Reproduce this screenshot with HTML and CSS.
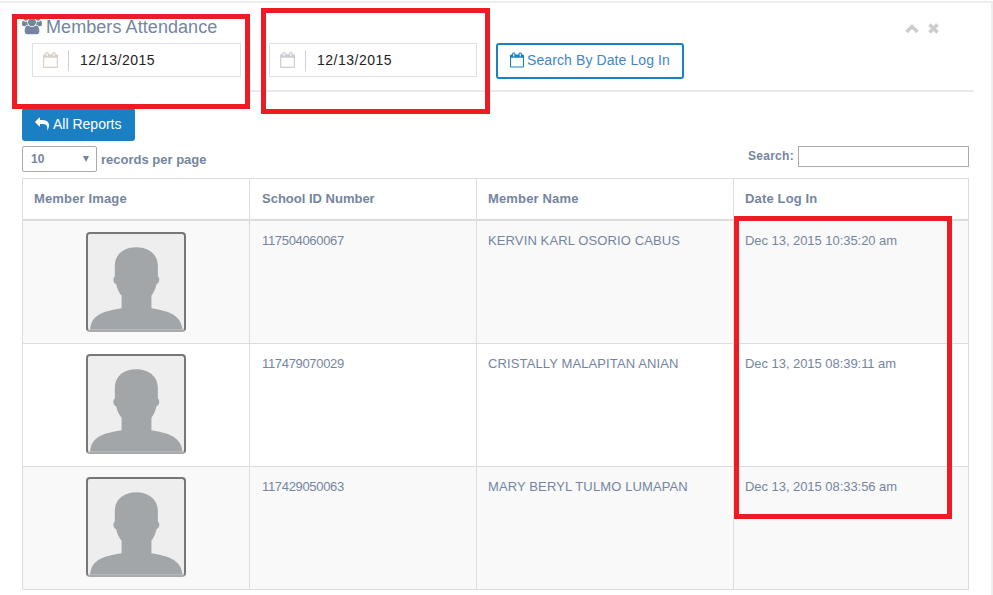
FILE: index.html
```html
<!DOCTYPE html>
<html lang="en">
<head>
    <meta charset="UTF-8">
    <title>Members Attendance</title>
    <link rel="stylesheet" href="styles.css">
</head>
<body>
    <svg class="icon-defs" width="0" height="0">
        <symbol id="cal" viewBox="0 0 1664 1792"><path d="M128 1664h1408v-1024h-1408v1024zm384-1216v-288q0-14-9-23t-23-9h-64q-14 0-23 9t-9 23v288q0 14 9 23t23 9h64q14 0 23-9t9-23zm768 0v-288q0-14-9-23t-23-9h-64q-14 0-23 9t-9 23v288q0 14 9 23t23 9h64q14 0 23-9t9-23zm384-64v1280q0 52-38 90t-90 38h-1408q-52 0-90-38t-38-90v-1280q0-52 38-90t90-38h128v-96q0-66 47-113t113-47h64q66 0 113 47t47 113v96h384v-96q0-66 47-113t113-47h64q66 0 113 47t47 113v96h128q52 0 90 38t38 90z"/></symbol>
        <symbol id="avatar" viewBox="0 0 295 295"><path d="M12 288C16 255 30 236 105 225L105 188C97 178 92 168 89 154C80 152 78 136 85 131L85 100C85 65 112 45 148 45C184 45 212 65 212 100L212 131C219 136 217 152 208 154C205 168 200 178 193 188L193 225C264 236 280 255 285 288Z"/></symbol>
    </svg>

    <div class="panel">
        <!-- Judul dan filter tanggal -->
        <div class="panel-head">
            <div class="head-title">
                <h2>
                    <svg class="icon-users" viewBox="0 0 1920 1792"><path d="M593 640q-162 5-265 128h-134q-82 0-138-40.5t-56-118.5q0-353 124-353 6 0 43.5 21t97.5 42.5 119 21.5q67 0 133-23-5 37-5 66 0 139 81 256zm1071 637q0 120-73 189.5t-194 69.5h-874q-121 0-194-69.5t-73-189.5q0-53 3.5-103.5t14-109 26.5-108.5 43-97.5 62-81 85.5-53.5 111.5-20q10 0 43 21.5t73 48 107 48 135 21.5 135-21.5 107-48 73-48 43-21.5q61 0 111.5 20t85.5 53.5 62 81 43 97.5 26.5 108.5 14 109 3.5 103.5zm-1024-1277q0 106-75 181t-181 75-181-75-75-181 75-181 181-75 181 75 75 181zm704 384q0 159-112.5 271.5t-271.5 112.5-271.5-112.5-112.5-271.5 112.5-271.5 271.5-112.5 271.5 112.5 112.5 271.5zm576 225q0 78-56 118.5t-138 40.5h-134q-103-123-265-128 81-117 81-256 0-29-5-66 66 23 133 23 59 0 119-21.5t97.5-42.5 43.5-21q124 0 124 353zm-128-609q0 106-75 181t-181 75-181-75-75-181 75-181 181-75 181 75 75 181z"/></svg>
                    Members Attendance
                </h2>
                <div class="date-field">
                    <span class="date-addon"><svg class="icon-cal icon-warm"><use href="#cal"/></svg></span>
                    <span class="date-value">12/13/2015</span>
                </div>
            </div>
            <div class="date-field date-second">
                <span class="date-addon"><svg class="icon-cal"><use href="#cal"/></svg></span>
                <span class="date-value">12/13/2015</span>
            </div>
            <button class="btn-search"><svg class="icon-cal-btn"><use href="#cal"/></svg> Search By Date Log In</button>
            <div class="panel-tools">
                <svg width="14" height="10" viewBox="0 0 14 10"><path d="M1.5 8L7 2.5 12.500 8"/></svg>
                <svg width="11" height="11" viewBox="0 0 11 11"><path d="M1.500 1.500L9.500 9.500M9.500 1.500L1.500 9.500"/></svg>
            </div>
        </div>

        <button class="btn-reports">
            <svg class="icon-reply" viewBox="0 0 1792 1792"><path d="M1792 1120q0 166-127 451-3 7-10.500 24t-13.500 30-13 22q-12 17-28 17-15 0-23.500-10t-8.500-25q0-9 2.500-26.500t2.500-23.500q5-68 5-123 0-101-17.500-181t-48.500-138.500-80-101-105.500-69.500-133-42.500-154-21.500-175.500-6h-224v256q0 26-19 45t-45 19-45-19l-512-512q-19-19-19-45t19-45l512-512q19-19 45-19t45 19 19 45v256h224q713 0 875 403 53 134 53 333z"/></svg>
            All Reports
        </button>

        <div class="table-tools">
            <div class="per-page">
                <span class="page-select">10<i class="caret"></i></span>
                <span>records per page</span>
            </div>
            <div class="search-box">
                <span>Search:</span>
                <span class="search-input"></span>
            </div>
        </div>

        <!-- Tabel kehadiran -->
        <table class="members">
            <colgroup>
                <col class="col-image"><col class="col-id"><col class="col-name"><col>
            </colgroup>
            <thead>
                <tr>
                    <th>Member Image</th>
                    <th class="cell-id">School ID Number</th>
                    <th>Member Name</th>
                    <th>Date Log In</th>
                </tr>
            </thead>
            <tbody>
                <tr>
                    <td class="cell-image"><span class="avatar"><svg><use href="#avatar"/></svg></span></td>
                    <td class="cell-id">117504060067</td>
                    <td class="cell-name">KERVIN KARL OSORIO CABUS</td>
                    <td class="cell-date">Dec 13, 2015 10:35:20 am</td>
                </tr>
                <tr>
                    <td class="cell-image"><span class="avatar"><svg><use href="#avatar"/></svg></span></td>
                    <td class="cell-id">117479070029</td>
                    <td class="cell-name">CRISTALLY MALAPITAN ANIAN</td>
                    <td class="cell-date">Dec 13, 2015 08:39:11 am</td>
                </tr>
                <tr>
                    <td class="cell-image"><span class="avatar"><svg><use href="#avatar"/></svg></span></td>
                    <td class="cell-id">117429050063</td>
                    <td class="cell-name">MARY BERYL TULMO LUMAPAN</td>
                    <td class="cell-date">Dec 13, 2015 08:33:56 am</td>
                </tr>
            </tbody>
        </table>
    </div>

    <!-- Kotak merah penanda di atas screenshot -->
    <div class="mark mark-one"></div>
    <div class="mark mark-two"></div>
    <div class="mark mark-three"></div>
</body>
</html>
```

FILE: styles.css
```css
html, body {
    height: 595px;
    overflow: hidden;
}

body {
    margin: 0;
    background: #fff;
    font-family: "Liberation Sans", Arial, sans-serif;
    color: #7585a0;
    position: relative;
}

.icon-defs {
    position: absolute;
}

.panel {
    box-sizing: border-box;
    width: 993px;
    margin-top: 1px;
    padding: 0 17px 0 22px;
    border-top: 2px solid #eeeeee;
    border-right: 2px solid #eeeeee;
    height: 594px;
}

.panel-head {
    display: flex;
    align-items: flex-start;
    height: 87px;
    border-bottom: 2px solid #e8eaee;
}

.head-title {
    width: 223px;
    height: 89px;
    background: #fff;
    flex: none;
}

.head-title h2 {
    display: flex;
    align-items: center;
    gap: 4px;
    height: 22px;
    margin: 13px 0 5px 0;
    font-size: 18px;
    font-weight: normal;
    letter-spacing: 0.07px;
    white-space: nowrap;
}

.icon-users {
    width: 20px;
    height: 19px;
    fill: #7585a0;
}

.date-field {
    box-sizing: border-box;
    display: flex;
    align-items: center;
    width: 209px;
    height: 34px;
    margin-left: 10px;
    border: 1px solid #dde2e9;
    background: #fff;
}

.date-second {
    width: 208px;
    margin: 40px 0 0 24px;
}

.date-addon {
    box-sizing: border-box;
    display: flex;
    align-items: center;
    justify-content: center;
    width: 36px;
    height: 21px;
    border-right: 1px solid #cfcfcf;
}

.icon-cal {
    width: 15px;
    height: 16px;
    fill: #c8ccd4;
}

.icon-warm {
    fill: #d8cfc6;
}

.date-value {
    margin-left: 11px;
    font-size: 14px;
    letter-spacing: 0.5px;
    color: #222;
}

.btn-search {
    box-sizing: border-box;
    display: flex;
    align-items: center;
    gap: 3px;
    width: 188px;
    height: 36px;
    margin: 40px 0 0 19px;
    padding: 0 0 2px 12px;
    border: 2px solid #1b80c3;
    border-radius: 3px;
    background: #fff;
    color: #3f86c9;
    font-family: inherit;
    font-size: 14px;
    letter-spacing: 0.1px;
    white-space: nowrap;
}

.icon-cal-btn {
    width: 14px;
    height: 16px;
    fill: #1b80c3;
}

.panel-tools {
    display: flex;
    align-items: center;
    gap: 9px;
    margin: 20px 0 0 221px;
}

.panel-tools svg {
    fill: none;
    stroke: #cccccc;
    stroke-width: 3.5;
}

.btn-reports {
    display: flex;
    align-items: center;
    gap: 4px;
    box-sizing: border-box;
    width: 113px;
    height: 33px;
    margin: 16px 0 0 0;
    padding: 0 0 2px 13px;
    border: none;
    border-radius: 3px;
    background: #1b80c3;
    color: #fff;
    font-family: inherit;
    font-size: 14px;
    white-space: nowrap;
}

.icon-reply {
    width: 14px;
    height: 14px;
    fill: #fff;
}

.table-tools {
    display: flex;
    justify-content: space-between;
    align-items: flex-start;
    width: 947px;
    margin-top: 5px;
    font-size: 13px;
    font-weight: bold;
}

.per-page {
    display: flex;
    align-items: center;
    gap: 4px;
}

.page-select {
    box-sizing: border-box;
    position: relative;
    width: 75px;
    height: 26px;
    padding-left: 8px;
    border: 1px solid #aaa;
    border-radius: 2px;
    font-size: 12px;
    line-height: 24px;
}

.caret {
    position: absolute;
    top: 9px;
    right: 7px;
    border-left: 3px solid transparent;
    border-right: 3px solid transparent;
    border-top: 6px solid #7585a0;
}

.search-box {
    display: flex;
    align-items: center;
    gap: 4px;
    font-size: 12px;
    letter-spacing: 0.3px;
}

.search-box span:first-child {
    margin-top: -2px;
}

.search-input {
    box-sizing: border-box;
    width: 171px;
    height: 21px;
    border: 1px solid #aaa;
}

.members {
    width: 947px;
    margin-top: 6px;
    border-collapse: collapse;
    table-layout: fixed;
    font-size: 13px;
}

.col-image {
    width: 227px;
}

.col-id {
    width: 227px;
}

.col-name {
    width: 257px;
}

.members th,
.members td {
    border: 1px solid #dddddd;
    text-align: left;
    vertical-align: top;
}

.members th {
    height: 41px;
    box-sizing: border-box;
    padding: 12px 11px 0 11px;
    border-bottom-width: 2px;
    background: #fff;
    letter-spacing: 0.15px;
}

.members td {
    height: 123px;
    box-sizing: border-box;
    padding: 12px 11px;
}

.members tbody tr:first-child td {
    height: 124px;
}

.members .cell-id {
    padding-left: 12px;
}

.members td.cell-id {
    letter-spacing: -0.33px;
}

.members th.cell-id {
    letter-spacing: 0;
}

.members td.cell-name {
    letter-spacing: 0.12px;
}

.members td.cell-date {
    letter-spacing: -0.05px;
}

.members tbody tr:nth-child(odd) td {
    background: #f9f9f9;
}

.members td.cell-image {
    padding: 10px 0 0 0;
    text-align: center;
}

.members tbody tr:first-child td.cell-image {
    padding-top: 11px;
}

.avatar {
    box-sizing: border-box;
    display: inline-block;
    width: 100px;
    height: 100px;
    border: 2px solid #777;
    border-bottom-color: #aaa;
    border-radius: 4px;
    background: #eeeeee;
}

.avatar svg {
    display: block;
    width: 100px;
    height: 100px;
    margin: -2px;
    fill: #a3a6a9;
}

.mark {
    box-sizing: border-box;
    position: absolute;
    border: 5px solid #ed1c24;
}

.mark-one {
    left: 12px;
    top: 14px;
    width: 238px;
    height: 95px;
}

.mark-two {
    left: 261px;
    top: 8px;
    width: 229px;
    height: 106px;
}

.mark-three {
    left: 734px;
    top: 216px;
    width: 218px;
    height: 303px;
}
```
